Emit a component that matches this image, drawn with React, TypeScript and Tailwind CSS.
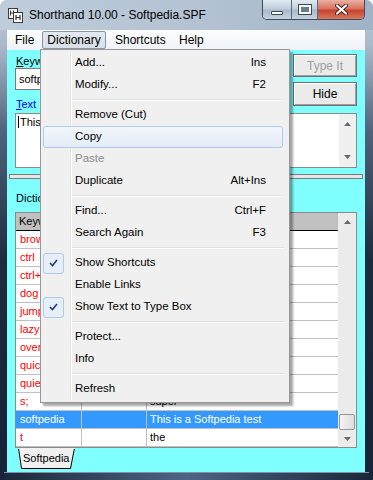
import React from "react";

type MenuItem =
  | "sep"
  | { label: string; keys?: string; hot?: boolean; disabled?: boolean; checked?: boolean };

const menuItems: MenuItem[] = [
  { label: "Add...", keys: "Ins" },
  { label: "Modify...", keys: "F2" },
  "sep",
  { label: "Remove (Cut)" },
  { label: "Copy", hot: true },
  { label: "Paste", disabled: true },
  { label: "Duplicate", keys: "Alt+Ins" },
  "sep",
  { label: "Find...", keys: "Ctrl+F" },
  { label: "Search Again", keys: "F3" },
  "sep",
  { label: "Show Shortcuts", checked: true },
  { label: "Enable Links" },
  { label: "Show Text to Type Box", checked: true },
  "sep",
  { label: "Protect..." },
  { label: "Info" },
  "sep",
  { label: "Refresh" },
];

const rows = [
  { key: "brown", text: "brown" },
  { key: "ctrl", text: "Control" },
  { key: "ctrl+alt", text: "Ctrl+Alt" },
  { key: "dog", text: "dog" },
  { key: "jumps", text: "jumps" },
  { key: "lazy", text: "lazy" },
  { key: "over", text: "over" },
  { key: "quick", text: "quick" },
  { key: "quiet", text: "quiet" },
  { key: "s;", text: "super" },
  { key: "softpedia", text: "This is a Softpedia test", selected: true },
  { key: "t", text: "the" },
];

function UpArrow() {
  return (
    <svg width="7" height="4" viewBox="0 0 7 4">
      <polygon points="3.5,0 7,4 0,4" fill="#6a6a6a" />
    </svg>
  );
}

function DownArrow() {
  return (
    <svg width="7" height="4" viewBox="0 0 7 4">
      <polygon points="0,0 7,0 3.5,4" fill="#6a6a6a" />
    </svg>
  );
}

function Check() {
  return (
    <svg width="9" height="8" viewBox="0 0 9 8">
      <path d="M1 4 L3.5 6.5 L8 1" fill="none" stroke="#1e3a8a" strokeWidth="1.6" />
    </svg>
  );
}

function DictionaryMenu() {
  return (
    <div className="absolute left-[40px] top-[49px] w-[250px] border border-[#979797] bg-[#f0f0f0] p-[2px] shadow-[3px_3px_2px_rgba(0,0,0,0.35)] text-[11.5px] text-black">
      {/* gutter line */}
      <div className="absolute left-[29px] top-[2px] bottom-[2px] w-[2px] border-l border-[#e2e3e3] border-r border-r-white" />
      {menuItems.map((item, i) =>
        item === "sep" ? (
          <div key={i} className="h-[8px] pt-[3px] pl-[29px] pr-[3px]">
            <div className="h-[1px] bg-[#e0e0e0]" />
            <div className="h-[1px] bg-white" />
          </div>
        ) : (
          <div
            key={i}
            className={`relative flex h-[22px] items-center mr-[4px] rounded-[3px] border ${
              item.hot
                ? "border-[#aeccf0] bg-[linear-gradient(#f3f7fc,#e3ecf7)]"
                : "border-transparent"
            }`}
          >
            <div className="w-[31px] h-full flex items-center">
              {item.checked && (
                <div className="w-[21px] h-[21px] -ml-[1px] rounded-[3px] border border-[#aecbee] bg-[#e6eef8] flex items-center justify-center">
                  <Check />
                </div>
              )}
            </div>
            <span className={`flex-1 whitespace-nowrap ${item.disabled ? "text-[#8d8d8d]" : ""}`}>
              {item.label}
            </span>
            {item.keys && <span className="pr-[16px] whitespace-nowrap">{item.keys}</span>}
          </div>
        )
      )}
    </div>
  );
}

export default function App() {
  return (
    <div className="relative w-[373px] h-[480px] overflow-hidden rounded-t-[7px] bg-[linear-gradient(to_bottom,#bccad8_0px,#aabacb_45px,#51647c_130px,#1d2b3e_260px,#172338_480px)] font-['Liberation_Sans',Arial,sans-serif] select-none">
      {/* title bar */}
      <div className="flex h-[30px] bg-[linear-gradient(to_right,#bfcddb,#b2c2d2_55%,#9fb2c6)]">
        <svg className="ml-[8px] mt-[8px]" width="15" height="15" viewBox="0 0 15 15">
          <rect x="0.5" y="0.5" width="9" height="10" fill="#f4f4f4" stroke="#3c3c3c" />
          <path d="M2.5 2.5v5M2.5 5h3M5.5 2.5v5" stroke="#3c3c3c" strokeWidth="1" />
          <rect x="5.5" y="4.5" width="9" height="10" fill="#ffffff" stroke="#3c3c3c" />
          <path d="M8 7v5M8 9.5h4M12 7v5" stroke="#2a2a2a" strokeWidth="1.2" />
        </svg>
        <div className="ml-[6px] mt-[7px] text-[12px] leading-[16px] text-black">
          Shorthand 10.00 - Softpedia.SPF
        </div>
        <div className="ml-auto mr-[8px] flex h-[20px] overflow-hidden rounded-b-[5px] border border-t-0 border-[#3d4c60]">
          <div className="flex w-[29px] items-center justify-center border-r border-[#5a6a7e] bg-[linear-gradient(#e2e9f0,#c0cddb_48%,#a7b8ca_52%,#c6d3e0)]">
            <div className="mt-[6px] h-[4px] w-[12px] rounded-[1px] border border-[#3a4a5e] bg-white" />
          </div>
          <div className="flex w-[26px] items-center justify-center border-r border-[#5a6a7e] bg-[linear-gradient(#e2e9f0,#c0cddb_48%,#a7b8ca_52%,#c6d3e0)]">
            <div className="h-[9px] w-[12px] border-2 border-white bg-[#6b7b90] shadow-[0_0_0_1px_#3a4a5e]" />
          </div>
          <div className="flex w-[46px] items-center justify-center bg-[linear-gradient(#eab0a2,#d8705c_48%,#c4422c_52%,#d9785c)]">
            <svg width="13" height="11" viewBox="0 0 13 11">
              <path d="M2 1.5 L11 9.5 M11 1.5 L2 9.5" stroke="#4a1e18" strokeWidth="4" strokeLinecap="round" />
              <path d="M2 1.5 L11 9.5 M11 1.5 L2 9.5" stroke="#ffffff" strokeWidth="2.2" strokeLinecap="round" />
            </svg>
          </div>
        </div>
      </div>

      {/* menu bar */}
      <div className="ml-[7px] mr-[8px] flex h-[20px] items-center bg-[linear-gradient(#fcfdfe,#eef2f7)] text-[12px] text-black">
        <div className="w-[35px] pl-[8px]">File</div>
        <div className="flex h-[18px] w-[64px] items-center justify-center rounded-[2px] border border-[#8a96a6] bg-[linear-gradient(#e4e9f0,#d8dfe8)]">
          Dictionary
        </div>
        <div className="w-[73px] pl-[9px]">Shortcuts</div>
        <div>Help</div>
      </div>

      {/* client area */}
      <div className="ml-[7px] mr-[8px] flex h-[422px] flex-col bg-[#80ffff] text-[11px] text-black">
        <div className="px-[8px] pt-[4px]">
          <div className="flex">
            <div className="flex-1 pr-[7px]">
              <div className="h-[14px] pl-[1px] leading-[14px]">
                <span className="underline">K</span>eyword
              </div>
              <div className="h-[22px] border border-[#7a7a7a] bg-white pl-[3px] leading-[20px]">softpedia</div>
              <div className="mt-[8px] h-[13px] pl-[1px] leading-[13px] text-[#0000ff]">
                <span className="underline">T</span>ext
              </div>
            </div>
            <div className="flex w-[64px] flex-col">
              <div className="flex h-[23px] items-center justify-center border border-[#707070] bg-[#ebebeb] text-[12px] text-[#a0a0a0] shadow-[inset_1px_1px_0_#ffffff,inset_-1px_-1px_0_#a0a0a0]">
                Type It
              </div>
              <div className="mt-[5px] flex h-[24px] items-center justify-center border border-[#707070] bg-[#ebebeb] text-[12px] shadow-[inset_1px_1px_0_#ffffff,inset_-1px_-1px_0_#a0a0a0]">
                Hide
              </div>
            </div>
          </div>
          <div className="mt-[2px] flex h-[55px] border border-[#8a8a8a] bg-white">
            <div className="flex-1 pl-[2px] pt-[2px] leading-[13px]">
              <span className="border-l border-black pl-[1px]">This is a Softpedia test</span>
            </div>
            <div className="flex w-[17px] flex-col items-center justify-between bg-[#f0f0f0] py-[8px]">
              <UpArrow />
              <DownArrow />
            </div>
          </div>
        </div>

        {/* splitter */}
        <div className="mx-[2px] mt-[6px] h-[5px] border border-[#7c7c7c] bg-[#e6e6e6]" />

        <div className="px-[8px]">
          <div className="mt-[12px] h-[14px] pl-[1px] leading-[14px]">Dictionary</div>
          <div className="mt-[7px] flex h-[236px] border border-[#8a8a8a] bg-white">
            <div className="flex-1">
              <div className="flex h-[18px] border-b border-black bg-[#c0c0c0] leading-[17px]">
                <div className="w-[66px] border-r border-[#a8a8a8] pl-[3px]">Keyword</div>
                <div className="w-[65px] border-r border-[#a8a8a8] pl-[3px]">Shortcut</div>
                <div className="flex-1 pl-[3px]">Text</div>
              </div>
              {rows.map((r) => (
                <div
                  key={r.key}
                  className={`flex h-[18px] border-b border-[#c0c0c0] leading-[17px] ${
                    r.selected ? "bg-[#3399ff] text-white" : ""
                  }`}
                >
                  <div
                    className={`w-[66px] overflow-hidden whitespace-nowrap border-r border-[#c0c0c0] pl-[4px] ${
                      r.selected ? "" : "text-[#ff0000]"
                    }`}
                  >
                    {r.key}
                  </div>
                  <div className="w-[65px] border-r border-[#c0c0c0]" />
                  <div className="flex-1 overflow-hidden whitespace-nowrap pl-[3px]">{r.text}</div>
                </div>
              ))}
            </div>
            <div className="flex w-[18px] flex-col items-center bg-[#ececec]">
              <div className="flex h-[17px] items-center justify-center">
                <UpArrow />
              </div>
              <div className="flex-1" />
              <div className="h-[16px] w-[16px] rounded-[2px] border border-[#979797] bg-[linear-gradient(to_right,#f4f4f4,#dcdcdc)]" />
              <div className="flex h-[17px] items-center justify-center">
                <DownArrow />
              </div>
            </div>
          </div>
          {/* tabs */}
          <div className="relative ml-[3px] h-[21px] w-[57px]">
            <svg className="absolute inset-0" width="57" height="21" viewBox="0 0 57 21">
              <polygon points="0.5,0 56.5,0 52.5,20.5 3.5,20.5" fill="#f0f0f0" stroke="#000" strokeWidth="1" />
              <line x1="0" y1="0.5" x2="57" y2="0.5" stroke="#f0f0f0" />
            </svg>
            <div className="relative pl-[5px] pt-[3px] text-[11px] leading-[14px]">Softpedia</div>
          </div>
        </div>
      </div>

      {/* bottom frame */}
      <div className="mx-[4px] h-[8px] border-t border-[#8190a3] bg-[linear-gradient(to_right,#1b283a,#4d6584_50%,#1b283a)]" />

      <DictionaryMenu />
    </div>
  );
}
